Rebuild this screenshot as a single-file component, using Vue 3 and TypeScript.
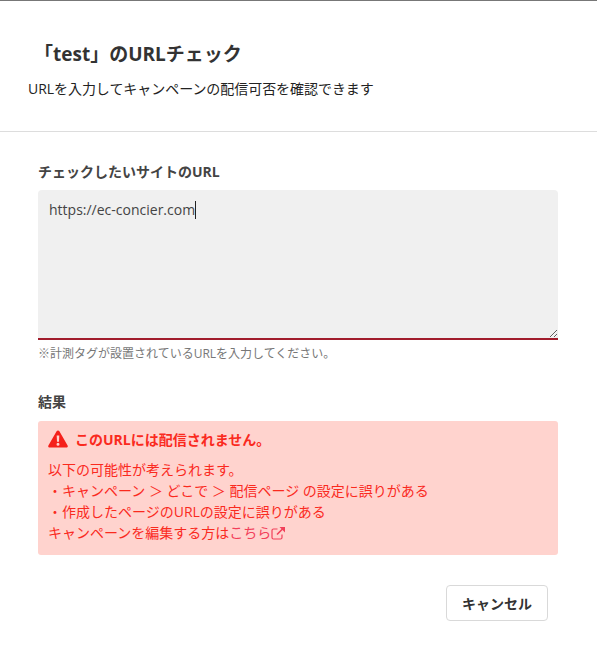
<script setup lang="ts">
import { ref } from 'vue';

const url = ref('https://ec-concier.com');
const reasons = [
  '・キャンペーン ＞ どこで ＞ 配信ページ の設定に誤りがある',
  '・作成したページのURLの設定に誤りがある',
];
</script>

<template>
  <div class="modal">
    <header class="modal__header">
      <h1 class="modal__title">「test」のURLチェック</h1>
      <p class="modal__sub">URLを入力してキャンペーンの配信可否を確認できます</p>
    </header>

    <section class="modal__body">
      <label class="field-label" for="url">チェックしたいサイトのURL</label>
      <div class="input-wrap">
        <textarea id="url" v-model="url" class="url-input" spellcheck="false" readonly></textarea>
        <span class="caret"></span>
      </div>
      <p class="hint">※計測タグが設置されているURLを入力してください。</p>

      <h2 class="result-label">結果</h2>
      <div class="alert">
        <div class="alert__head">
          <svg class="alert__icon" viewBox="0 0 20 18" width="20" height="18" aria-hidden="true">
            <path
              fill-rule="evenodd"
              d="M10 .4c.6 0 1.1.3 1.4.8l8.2 14.2c.6 1-.1 2.2-1.4 2.2H1.800C.5 17.600-.2 16.400.4 15.400L8.600 1.200C8.900.7 9.400.4 10 .4zM8.700 5.500l.3 6.300h2l.3-6.300H8.700zM10 12.800a1.500 1.500 0 1 0 0 3 1.500 1.500 0 0 0 0-3z"
            />
          </svg>
          <strong>このURLには配信されません。</strong>
        </div>
        <p class="alert__text">以下の可能性が考えられます。</p>
        <p v-for="r in reasons" :key="r" class="alert__text">{{ r }}</p>
        <p class="alert__text">
          キャンペーンを編集する方は<a class="alert__link" href="#">こちら<svg viewBox="0 0 15 14" width="15" height="14" aria-hidden="true"><path fill="none" stroke="currentColor" stroke-width="1.200" d="M11 8.500v3a1.500 1.500 0 0 1-1.500 1.500h-7A1.500 1.500 0 0 1 1 11.500v-7A1.500 1.500 0 0 1 2.500 3H6.500" /><path fill="none" stroke="currentColor" stroke-width="1.600" d="M6 8.500 12 2.500" /><path fill="currentColor" d="M8.500 1H14v5.500z" /></svg></a>
        </p>
      </div>
    </section>

    <footer class="modal__footer">
      <button type="button" class="btn">キャンセル</button>
    </footer>
  </div>
</template>

<style>
html, body { background: #fff; }
</style>

<style scoped>
.modal {
  width: 597px;
  height: 651px;
  box-sizing: border-box;
  border-top: 1px solid #777;
  overflow: hidden;
  background: #fff;
  color: #333;
  font-family: "Open Sans", "Noto Sans CJK JP", sans-serif;
}
.modal__header {
  height: 131px;
  box-sizing: border-box;
  padding: 40px 28px 0;
  border-bottom: 1px solid #ddd;
}
.modal__title {
  margin: 0 0 0 6px;
  font-size: 19px;
  line-height: 26px;
  font-weight: 700;
  color: #333;
}
.modal__sub {
  margin: 12px 0 0;
  font-size: 14px;
  letter-spacing: -0.05px;
  line-height: 20px;
  color: #222;
}
.modal__body {
  padding: 30px 39px 0 38px;
}
.field-label {
  display: block;
  font-size: 14px;
  line-height: 20px;
  font-weight: 700;
  color: #444;
}
.input-wrap {
  position: relative;
  margin-top: 8px;
  height: 150px;
}
.url-input {
  display: block;
  width: 100%;
  height: 100%;
  box-sizing: border-box;
  margin: 0;
  padding: 10px 11px;
  border: 0;
  border-bottom: 2px solid #a11c2c;
  border-radius: 4px 4px 0 0;
  outline: none;
  background: #f0f0f0;
  color: #444;
  font: inherit;
  font-size: 14px;
  line-height: 20px;
  resize: vertical;
}
.caret {
  position: absolute;
  left: 157px;
  top: 11px;
  width: 1px;
  height: 18px;
  background: #222;
}
.hint {
  margin: 5px 0 0;
  font-size: 12px;
  line-height: 18px;
  color: #777;
}
.result-label {
  margin: 29px 0 0;
  font-size: 14px;
  line-height: 20px;
  font-weight: 700;
  color: #444;
}
.alert {
  margin-top: 9px;
  height: 134px;
  box-sizing: border-box;
  padding: 7px 10px 8px;
  border-radius: 3px;
  background: #ffd3ce;
  color: #fa2a1e;
  font-size: 14px;
  line-height: 21px;
}
.alert__head {
  display: flex;
  align-items: center;
  gap: 7px;
  height: 22px;
  margin-bottom: 9px;
}
.alert__head strong { font-weight: 700; }
.alert__icon { fill: #f5201b; flex-shrink: 0; }
.alert__text { margin: 0; }
.alert__link {
  color: #f2405a;
  text-decoration: none;
}
.alert__link svg { vertical-align: -2px; }
.modal__footer {
  display: flex;
  justify-content: flex-end;
  padding: 30px 49px 0 0;
}
.btn {
  width: 102px;
  height: 36px;
  border: 1px solid #d9d9d9;
  border-radius: 4px;
  background: #fff;
  color: #333;
  font: inherit;
  font-size: 14px;
  font-weight: 700;
}
</style>
